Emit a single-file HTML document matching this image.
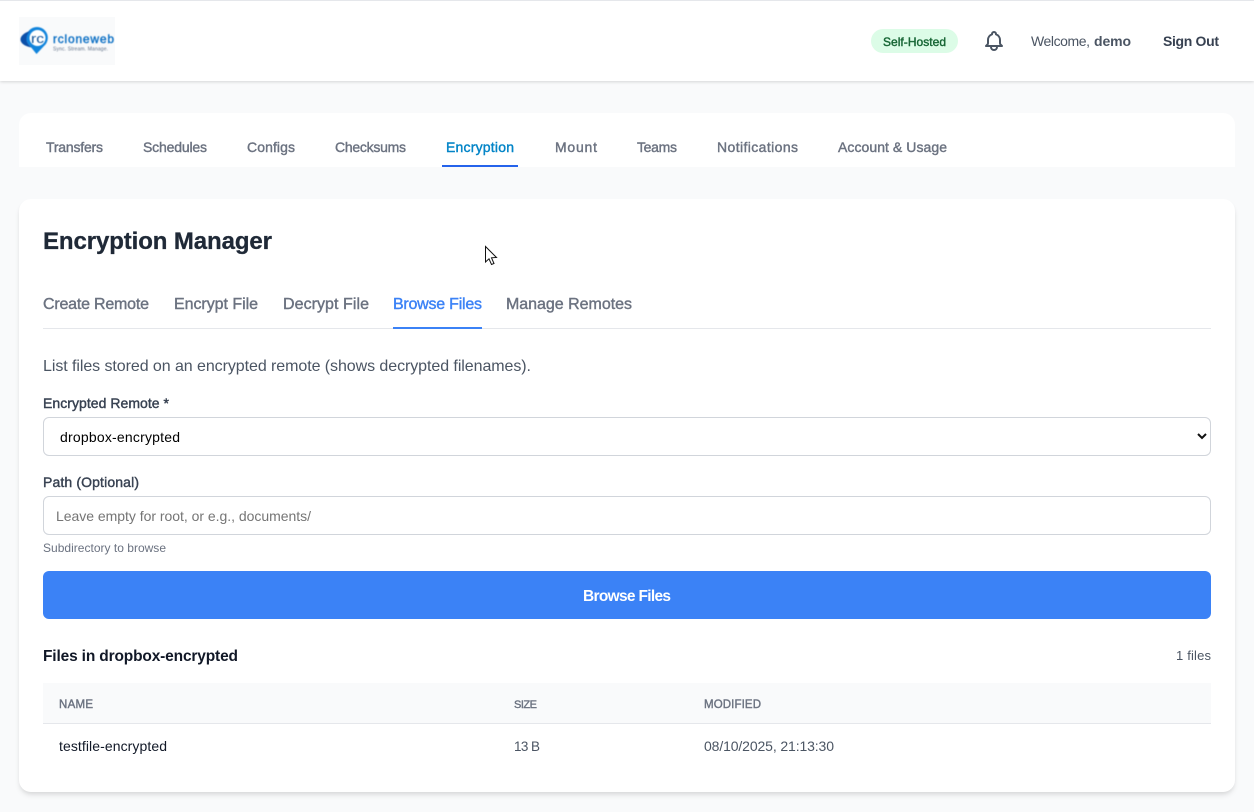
<!DOCTYPE html>
<html lang="en">
<head>
<meta charset="utf-8">
<title>Encryption Manager</title>
<style>
html,body{margin:0;padding:0;width:1254px;height:812px;overflow:hidden;background:#f9fafb;font-family:"Liberation Sans",sans-serif}
.a{position:absolute;box-sizing:border-box}
svg.t{position:absolute;left:0;top:0}
svg.t text{font-family:"Liberation Sans",sans-serif;font-size:14px}
.m{stroke-width:.4px;paint-order:stroke}
</style>
</head>
<body>
<div class="a" style="left:0;top:0;width:1254px;height:81px;background:#fff;border-top:1px solid #e5e7eb;box-shadow:0 1px 3px rgba(0,0,0,.15)"></div>
<div class="a" style="left:19px;top:17px;width:96px;height:48px;background:#f9fafb"></div>
<div class="a" style="left:871px;top:29px;width:87px;height:24px;border-radius:12px;background:#dcfce7"></div>
<div class="a" style="left:19px;top:113px;width:1216px;height:54px;background:#fff;border-radius:12px 12px 0 0"></div>
<div class="a" style="left:442px;top:165px;width:76px;height:2px;background:#2563eb"></div>
<div class="a" style="left:19px;top:199px;width:1216px;height:593px;background:#fff;border-radius:12px;box-shadow:0 4px 6px -1px rgba(0,0,0,.1),0 2px 4px -1px rgba(0,0,0,.06)"></div>
<div class="a" style="left:43px;top:328px;width:1168px;height:1px;background:#e5e7eb"></div>
<div class="a" style="left:393px;top:327px;width:89px;height:2px;background:#3b82f6"></div>
<div class="a" style="left:43px;top:417px;width:1168px;height:39px;background:#fff;border:1px solid #d1d5db;border-radius:6px"></div>
<div class="a" style="left:43px;top:496px;width:1168px;height:39px;background:#fff;border:1px solid #d1d5db;border-radius:6px"></div>
<div class="a" style="left:43px;top:571px;width:1168px;height:48px;background:#3b82f6;border-radius:6px"></div>
<div class="a" style="left:43px;top:683px;width:1168px;height:41px;background:#f9fafb;border-bottom:1px solid #e5e7eb"></div>

<svg class="t" width="1254" height="812" viewBox="0 0 1254 812" xmlns="http://www.w3.org/2000/svg">
  <!-- logo -->
  <g style="filter:blur(.5px)">
    <path d="M36.500 54 L30 46 A10.800 10.800 0 1 1 44 46 Z" fill="#1184dc"/>
    <path d="M30 31 C17 35 17 45 32 47.500 C25 43 25 36 30 31Z" fill="#0b4fa8"/>
    <circle cx="37.500" cy="38" r="8" fill="#fff"/>
    <text x="31" y="43" textLength="13" lengthAdjust="spacingAndGlyphs" fill="#0b4f96" style="font-size:13px">rc</text>
    <text x="53" y="43" textLength="61" fill="#0b6fc4" stroke="#0b6fc4" stroke-width=".4" style="font-size:12px">rcloneweb</text>
    <text x="53" y="50.500" textLength="55" fill="#64748b" style="font-size:5px">Sync. Stream. Manage.</text>
  </g>

  <!-- header -->
  <text x="883" y="46" textLength="63" fill="#166534" stroke="#166534" class="m" style="font-size:12px">Self-Hosted</text>
  <path transform="translate(982 29)" d="M15 17h5l-1.405-1.405A2.032 2.032 0 0118 14.158V11a6.002 6.002 0 00-4-5.659V5a2 2 0 10-4 0v.341C7.67 6.165 6 8.388 6 11v3.159c0 .538-.214 1.055-.595 1.436L4 17h5m6 0v1a3 3 0 11-6 0v-1m6 0H9" fill="none" stroke="#4b5563" stroke-width="2" stroke-linecap="round" stroke-linejoin="round"/>
  <text x="1031" y="46" textLength="59" fill="#4b5563">Welcome,</text>
  <text x="1094" y="46" textLength="37" fill="#4b5563" font-weight="700">demo</text>
  <text x="1163" y="46" textLength="56" fill="#374151" font-weight="700">Sign Out</text>

  <!-- main nav -->
  <g fill="#6b7280" stroke="#6b7280" class="m">
    <text x="46" y="152" textLength="57">Transfers</text>
    <text x="143" y="152" textLength="64">Schedules</text>
    <text x="247" y="152" textLength="48">Configs</text>
    <text x="335" y="152" textLength="71">Checksums</text>
    <text x="555" y="152" textLength="42">Mount</text>
    <text x="637" y="152" textLength="40">Teams</text>
    <text x="717" y="152" textLength="81">Notifications</text>
    <text x="838" y="152" textLength="109">Account &amp; Usage</text>
  </g>
  <text x="446" y="152" textLength="68" fill="#0284c7" stroke="#0284c7" class="m">Encryption</text>

  <text x="43" y="249" textLength="229" fill="#1f2937" stroke="#1f2937" stroke-width=".3" font-weight="700" style="font-size:24px">Encryption Manager</text>

  <!-- sub tabs -->
  <g fill="#6b7280" stroke="#6b7280" class="m">
    <text x="43" y="309" textLength="106" style="font-size:16px">Create Remote</text>
    <text x="174" y="309" textLength="84" style="font-size:16px">Encrypt File</text>
    <text x="283" y="309" textLength="86" style="font-size:16px">Decrypt File</text>
    <text x="506" y="309" textLength="126" style="font-size:16px">Manage Remotes</text>
  </g>
  <text x="393" y="309" textLength="89" fill="#3b82f6" stroke="#3b82f6" class="m" style="font-size:16px">Browse Files</text>

  <text x="43" y="371" textLength="488" fill="#4b5563" style="font-size:16px">List files stored on an encrypted remote (shows decrypted filenames).</text>

  <text x="43" y="408" textLength="126" fill="#374151" stroke="#374151" class="m">Encrypted Remote *</text>
  <text x="60" y="442" textLength="120" fill="#000">dropbox-encrypted</text>
  <path d="M1198 434 L1202 438 L1206 434" fill="none" stroke="#111" stroke-width="2"/>

  <text x="43" y="487" textLength="96" fill="#374151" stroke="#374151" class="m">Path (Optional)</text>
  <text x="56" y="521" textLength="255" fill="#757575">Leave empty for root, or e.g., documents/</text>
  <text x="43" y="552" textLength="123" fill="#6b7280" style="font-size:12px">Subdirectory to browse</text>

  <text x="583" y="601" textLength="88" fill="#fff" font-weight="700" style="font-size:15.500px">Browse Files</text>

  <text x="43" y="661" textLength="195" fill="#111827" font-weight="700" style="font-size:15.500px">Files in dropbox-encrypted</text>
  <text x="1176" y="660" textLength="35" fill="#4b5563" style="font-size:13px">1 files</text>

  <g fill="#6b7280" stroke="#6b7280" class="m">
    <text x="59" y="708" textLength="34" style="font-size:11.500px">NAME</text>
    <text x="514" y="708" textLength="23" style="font-size:11px">SIZE</text>
    <text x="704" y="708" textLength="57" style="font-size:11.500px">MODIFIED</text>
  </g>
  <text x="59" y="751" textLength="108" fill="#111827">testfile-encrypted</text>
  <text x="514" y="751" textLength="26" fill="#4b5563" style="font-size:13.500px">13 B</text>
  <text x="704" y="751" textLength="130" fill="#4b5563">08/10/2025, 21:13:30</text>

  <!-- cursor -->
  <path d="M485.500 246.500 V262 L489 258.800 L491.500 264.500 L494 263.500 L491.500 257.800 L496.500 257.500 Z" fill="#fff" stroke="#111" stroke-width="1" stroke-linejoin="miter"/>
</svg>
</body>
</html>
